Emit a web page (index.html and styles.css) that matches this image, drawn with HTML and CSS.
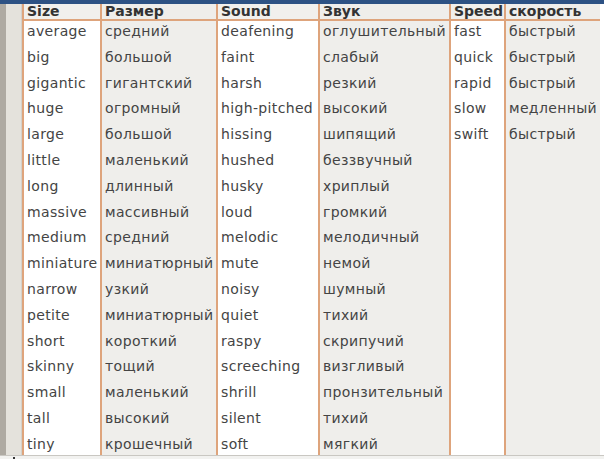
FILE: index.html
```html
<!DOCTYPE html>
<html lang="ru">
<head>
<meta charset="utf-8">
<title>Adjectives</title>
<link rel="stylesheet" href="styles.css">
</head>
<body>
<div class="topbar"></div>
<div class="main">
  <div class="gutter"><div class="g-dark"></div><div class="g-light"></div></div>
  <div class="tablewrap">
    <table class="words">
      <colgroup>
        <col class="c1"><col class="c2"><col class="c3"><col class="c4"><col class="c5"><col class="c6">
      </colgroup>
      <thead>
        <tr><th>Size</th><th class="alt">Размер</th><th>Sound</th><th class="alt">Звук</th><th>Speed</th><th class="alt">скорость</th></tr>
      </thead>
      <tbody>
        <tr><td>average</td><td class="alt">средний</td><td>deafening</td><td class="alt">оглушительный</td><td>fast</td><td class="alt">быстрый</td></tr>
        <tr><td>big</td><td class="alt">большой</td><td>faint</td><td class="alt">слабый</td><td>quick</td><td class="alt">быстрый</td></tr>
        <tr><td>gigantic</td><td class="alt">гигантский</td><td>harsh</td><td class="alt">резкий</td><td>rapid</td><td class="alt">быстрый</td></tr>
        <tr><td>huge</td><td class="alt">огромный</td><td>high-pitched</td><td class="alt">высокий</td><td>slow</td><td class="alt">медленный</td></tr>
        <tr><td>large</td><td class="alt">большой</td><td>hissing</td><td class="alt">шипящий</td><td>swift</td><td class="alt">быстрый</td></tr>
        <tr><td>little</td><td class="alt">маленький</td><td>hushed</td><td class="alt">беззвучный</td><td></td><td class="alt"></td></tr>
        <tr><td>long</td><td class="alt">длинный</td><td>husky</td><td class="alt">хриплый</td><td></td><td class="alt"></td></tr>
        <tr><td>massive</td><td class="alt">массивный</td><td>loud</td><td class="alt">громкий</td><td></td><td class="alt"></td></tr>
        <tr><td>medium</td><td class="alt">средний</td><td>melodic</td><td class="alt">мелодичный</td><td></td><td class="alt"></td></tr>
        <tr><td>miniature</td><td class="alt">миниатюрный</td><td>mute</td><td class="alt">немой</td><td></td><td class="alt"></td></tr>
        <tr><td>narrow</td><td class="alt">узкий</td><td>noisy</td><td class="alt">шумный</td><td></td><td class="alt"></td></tr>
        <tr><td>petite</td><td class="alt">миниатюрный</td><td>quiet</td><td class="alt">тихий</td><td></td><td class="alt"></td></tr>
        <tr><td>short</td><td class="alt">короткий</td><td>raspy</td><td class="alt">скрипучий</td><td></td><td class="alt"></td></tr>
        <tr><td>skinny</td><td class="alt">тощий</td><td>screeching</td><td class="alt">визгливый</td><td></td><td class="alt"></td></tr>
        <tr><td>small</td><td class="alt">маленький</td><td>shrill</td><td class="alt">пронзительный</td><td></td><td class="alt"></td></tr>
        <tr><td>tall</td><td class="alt">высокий</td><td>silent</td><td class="alt">тихий</td><td></td><td class="alt"></td></tr>
        <tr><td>tiny</td><td class="alt">крошечный</td><td>soft</td><td class="alt">мягкий</td><td></td><td class="alt"></td></tr>
      </tbody>
    </table>
  </div>
</div>
<div class="bottom"><span class="mark"></span></div>
</body>
</html>
```
FILE: styles.css
```css
html, body {
  margin: 0;
  padding: 0;
  background: #ffffff;
  overflow: hidden;
  height: 459px;
}
body {
  font-family: "DejaVu Sans", Verdana, sans-serif;
  color: #444444;
}
.topbar {
  height: 4px;
  background: #2d5284;
}
.main {
  display: flex;
  height: 451px;
  border-bottom: 1px solid #c9c7c2;
}
.gutter {
  display: flex;
  width: 22px;
  flex: none;
}
.g-dark {
  width: 6px;
  background: #aeaaa2;
}
.g-light {
  flex: 1;
  background: #e4e2dc;
  border-right: 1px solid #d4d1ca;
}
.tablewrap {
  width: 578px;
  flex: none;
  overflow: hidden;
}
.words {
  border-collapse: collapse;
  table-layout: fixed;
  width: 578px;
  font-size: 14px;
  letter-spacing: 0.35px;
}
.c1 { width: 78px; }
.c2 { width: 116px; }
.c3 { width: 102px; }
.c4 { width: 131px; }
.c5 { width: 55px; }
.c6 { width: 96px; }
.words th, .words td {
  border-left: 2px solid #dea47c;
  padding: 0 0 0 3px;
  text-align: left;
  white-space: nowrap;
  overflow: hidden;
}
.words td:last-child, .words th:last-child {
  border-right: 2px solid #dea47c;
}
.words th {
  height: 15px;
  line-height: 15px;
  font-weight: bold;
  letter-spacing: 0;
  color: #333333;
  background: #f1f0ed;
  border-bottom: 2px solid #dea47c;
  vertical-align: top;
}
.words td {
  height: 25.8px;
  line-height: 20px;
  vertical-align: top;
}
.words .alt {
  background: #efeeeb;
}
.bottom {
  height: 3px;
  background: #f2f2f0;
  position: relative;
}
.mark {
  position: absolute;
  left: 13px;
  top: 1px;
  width: 2px;
  height: 2px;
  background: #333;
}
```
